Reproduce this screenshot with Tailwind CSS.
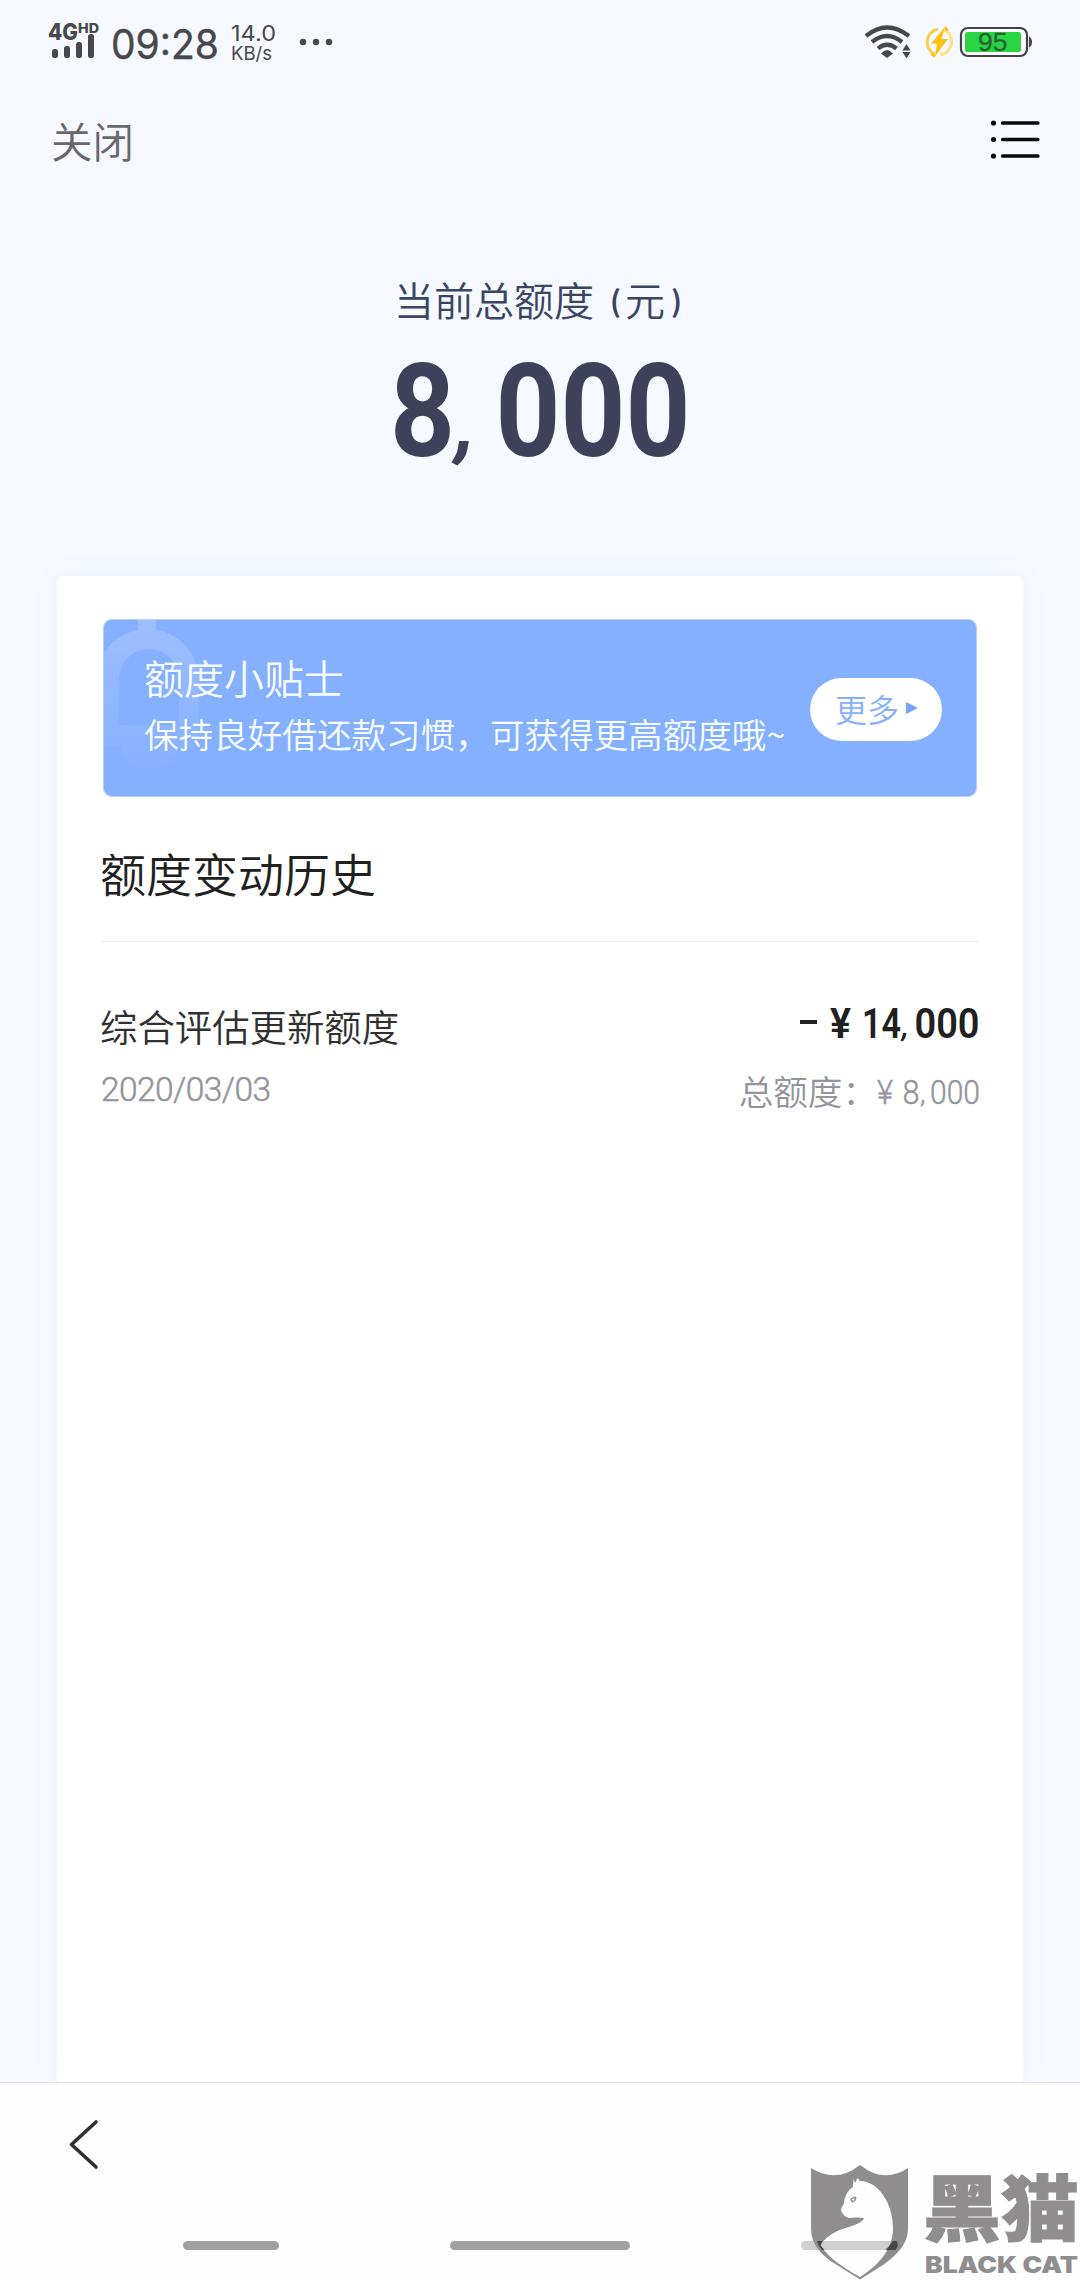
<!DOCTYPE html>
<html lang="zh-CN">
<head>
<meta charset="utf-8">
<title>额度</title>
<script src="https://cdn.jsdelivr.net/npm/@tailwindcss/browser@4"></script>
</head>
<body class="bg-[#f6f9ff]">
<div class="relative flex h-[2280px] w-[1080px] flex-col overflow-hidden bg-[#f6f9ff] font-['Noto_Sans_CJK_SC',sans-serif] font-[350]">

  <!-- status bar -->
  <div class="flex h-[84px] shrink-0 justify-between">
    <svg class="h-[84px] w-[360px] font-[Inter,sans-serif] font-normal" viewBox="0 0 360 84" fill="#47484b">
      <text x="48" y="40" font-size="23" font-weight="800" textLength="30" lengthAdjust="spacingAndGlyphs">4G</text>
      <text x="78" y="33" font-size="13" font-weight="800" textLength="21" lengthAdjust="spacingAndGlyphs">HD</text>
      <rect x="52" y="49" width="6" height="9" rx="2.5"/><rect x="64" y="46" width="6" height="12" rx="2.5"/><rect x="76" y="42" width="6" height="16" rx="2.5"/><rect x="88" y="34" width="6" height="24" rx="2.5"/>
      <text x="111" y="59" font-size="40.500" textLength="108" lengthAdjust="spacingAndGlyphs" stroke="#47484b" stroke-width=".4">09:28</text>
      <text x="231" y="41" font-size="21" textLength="45" lengthAdjust="spacingAndGlyphs">14.0</text>
      <text x="231" y="60" font-size="18.500" textLength="41" lengthAdjust="spacingAndGlyphs">KB/s</text>
      <circle cx="303" cy="42" r="3.200"/><circle cx="316" cy="42" r="3.200"/><circle cx="329" cy="42" r="3.200"/>
    </svg>
    <svg class="h-[84px] w-[240px] font-['Liberation_Sans',sans-serif] font-normal" viewBox="840 0 240 84" fill="none">
      <g stroke="#47484b" stroke-width="4.200">
        <path d="M866 36Q887 19 909 36"/><path d="M872 42Q887 30 902 42"/><path d="M878 48.500Q887 41 896.500 48.500"/>
      </g>
      <path d="M881 53.500Q887 46.500 893 53.500L887 58z" fill="#47484b"/>
      <path d="M902.500 50.500L906.500 44l4 6.500zM902.500 52l4 6.500 4-6.500z" fill="#47484b"/>
      <path d="M935 54.500A13.500 13.500 0 0 1 938 29" stroke="#fad04b" stroke-width="3"/>
      <path d="M943 29A13.500 13.500 0 0 1 940 55" stroke="#fbe08a" stroke-width="3"/>
      <path d="M945 27L931 43.500h6L935 56.500 948 39h-6.500z" fill="#fdc20f"/>
      <path d="M945 27l2.500 3.500M935 56.500l-4-3" stroke="#fdc20f" stroke-width="2.500"/>
      <rect x="961" y="28" width="66" height="28" rx="7" fill="#fff" stroke="#424347" stroke-width="2.200"/>
      <rect x="965" y="32" width="56" height="20" rx="2.500" fill="#29d543"/>
      <path d="M1029 36.500q3 1.500 3 5.500t-3 5.500z" fill="#424347"/>
      <text x="978" y="51" font-size="25" fill="#2c6135" textLength="29.500" lengthAdjust="spacingAndGlyphs" stroke="#2c6135" stroke-width=".3">95</text>
    </svg>
  </div>

  <!-- title bar -->
  <div class="flex h-[112px] shrink-0 items-center justify-between pr-10 pl-[51px]">
    <div class="text-[41.500px] leading-[60px] text-[#66686b]">关闭</div>
    <svg class="mb-0.5 h-[40px] w-[50px]" viewBox="990 119 50 40" fill="#060708">
      <circle cx="993.500" cy="123" r="2.600"/><circle cx="993.500" cy="139.500" r="2.600"/><circle cx="993.500" cy="156" r="2.600"/>
      <rect x="1001" y="121.200" width="38.500" height="3.600" rx="1.500"/><rect x="1001" y="137.700" width="38.500" height="3.600" rx="1.500"/><rect x="1001" y="154.200" width="38.500" height="3.600" rx="1.500"/>
    </svg>
  </div>

  <!-- total quota -->
  <div class="flex h-[380px] shrink-0 flex-col items-center pt-[73px]">
    <div class="flex h-[60px] w-[292px] items-center text-[40px] leading-[60px] whitespace-nowrap text-[#3a4563]">
      <span>当前总额度</span>
      <span class="ml-[12px] w-[20px] text-center text-[29px] leading-[60px] font-bold">(</span><span>元</span><span class="ml-0.5 w-[20px] text-center text-[29px] leading-[60px] font-bold">)</span>
    </div>
    <svg class="mt-[21px] h-[120px] w-[300px] overflow-visible font-[Roboto,sans-serif]" viewBox="390 350 300 120" fill="#3b4259" font-size="130" font-weight="700">
      <text x="390" y="456" textLength="65" lengthAdjust="spacingAndGlyphs">8</text>
      <text x="456" y="451" font-size="84" font-style="italic">,</text>
      <text x="495.500" y="456" textLength="195" lengthAdjust="spacingAndGlyphs">000</text>
    </svg>
  </div>

  <!-- card -->
  <div class="mx-[57px] flex grow flex-col rounded-t-lg bg-white px-[44px] pt-[43px] shadow-[0_0_24px_#e9f0ff]">
    <div class="relative mx-0.5 flex h-[178px] shrink-0 items-center justify-between overflow-hidden rounded-[9px] border border-[#b2d0ff] bg-[#85afff] pr-[34px] pl-[40px] text-[#f8fdff]">
      <svg class="absolute top-0 left-0 h-[176px] w-[110px]" viewBox="104 620 110 176">
        <defs><linearGradient id="bell" x1="0" y1="0" x2="0" y2="1"><stop offset="0" stop-color="#fff" stop-opacity=".2"/><stop offset="1" stop-color="#fff" stop-opacity=".01"/></linearGradient></defs>
        <path fill="url(#bell)" fill-rule="evenodd" d="M138 618h18v12c25 4 43 25 43 51v66h-21c-2 16-13 25-30 25s-25-10-27-25H96v-66c0-26 18-47 42-51zM119 725h60v-45c0-17-13-31-30-31s-30 14-30 31z"/>
      </svg>
      <div class="relative flex flex-col pb-[7px]">
        <div class="h-[57px] text-[40px] leading-[57px]">额度小贴士</div>
        <div class="h-[54px] text-[34.600px] leading-[54px] whitespace-nowrap">保持良好借还款习惯，可获得更高额度哦~</div>
      </div>
      <div class="relative mt-0.5 flex h-[63px] w-[132px] items-center rounded-full bg-white pl-[25px] text-[32px] leading-[60px] text-[#85afff]">
        <span class="pb-[3px]">更多</span>
        <svg class="mb-0.5 ml-[7px] h-[12px] w-[12px]" viewBox="0 0 12 12"><path d="M0 0l12 6-12 6z" fill="#76a5f8"/></svg>
      </div>
    </div>

    <div class="mt-[40px] h-[70px] text-[46px] leading-[70px] text-[#202020]"><span class="-ml-px">额度变动历史</span></div>
    <div class="mt-[34px] h-px bg-[#ececee]"></div>

    <div class="mt-[57px] flex justify-between">
      <div class="flex flex-col">
        <div class="-ml-px h-[54px] text-[37.400px] leading-[54px] text-[#303030]">综合评估更新额度</div>
        <svg class="mt-[10px] h-[50px] w-[180px] overflow-visible font-[Roboto,sans-serif]" viewBox="102 1063 180 50" fill="#92959d" font-size="33.500" font-weight="300">
          <text x="102" y="1101" textLength="170" stroke="#92959d" stroke-width=".5"><tspan>2020/03/03</tspan></text>
        </svg>
      </div>
      <div class="flex flex-col items-end">
        <svg class="h-[60px] w-[190px] overflow-visible font-[Roboto,sans-serif]" viewBox="789 999 190 60" fill="#202020" font-size="42" font-weight="600">
          <rect x="800" y="1020" width="17" height="4"/>
          <text x="830" y="1038" textLength="21" lengthAdjust="spacingAndGlyphs">¥</text>
          <text x="862" y="1038" textLength="39" lengthAdjust="spacingAndGlyphs">14</text>
          <text x="902" y="1036" font-size="29" font-style="italic">,</text>
          <text x="914.500" y="1038" textLength="65" lengthAdjust="spacingAndGlyphs">000</text>
        </svg>
        <div class="mt-[4px] flex h-[54px] items-start text-[34.600px] leading-[54px] text-[#92959d]">
          <span class="-mr-[3px]">总额度：</span>
          <svg class="h-[50px] w-[105px] overflow-visible font-[Roboto,sans-serif]" viewBox="874 1063 105 50" fill="#92959d" font-size="33" font-weight="300" stroke="#92959d" stroke-width=".5">
            <text x="877" y="1104" textLength="16" lengthAdjust="spacingAndGlyphs">¥</text>
            <text x="902.500" y="1104" textLength="17" lengthAdjust="spacingAndGlyphs">8</text>
            <text x="920" y="1103" font-size="28">,</text>
            <text x="930" y="1104" textLength="50" lengthAdjust="spacingAndGlyphs">000</text>
          </svg>
        </div>
      </div>
    </div>
  </div>

  <!-- bottom navigation -->
  <div class="relative flex h-[198px] shrink-0 flex-col border-t border-[#e2e3e5] bg-[#fefefe]">
    <svg class="mt-[35px] ml-[66px] h-[54px] w-[36px] shrink-0" viewBox="66 2118 36 54" fill="none" stroke="#303030" stroke-width="3.600" stroke-linecap="round" stroke-linejoin="round"><path d="M96 2122L71.500 2144.500 96 2167"/></svg>
    <div class="mt-[69px] flex h-[9px] justify-between pr-[183px] pl-[183px]">
      <div class="w-[96px] rounded-full bg-[#a0a0a0]"></div>
      <div class="w-[180px] rounded-full bg-[#a0a0a0]"></div>
      <div class="w-[96px] rounded-full bg-[#cfcfcf]"></div>
    </div>
  </div>

  <!-- brand watermark -->
  <svg class="absolute top-[2150px] left-[790px] h-[130px] w-[290px]" viewBox="790 2150 290 130" fill="#8f8d8e">
    <path fill-rule="evenodd" d="M811 2168Q836 2184 860 2165Q884 2184 908 2168V2228C908 2244 897 2255 883 2265L860 2279.500 837 2265C820 2255 811 2244 811 2228zM855 2183l-1.500-4.500L853 2187C847 2191 845 2196 844 2203L841 2209C841 2213 845 2217 849 2218Q856 2217 864 2218C861 2226 842 2227 832 2234Q824 2239 820.500 2245C827 2256 839 2265 860 2277C879 2265 893 2249 893 2228C893 2203 878 2181 860 2181L857.500 2178z"/>
    <path d="M850 2200q1-3 5-3.500l1.500 1q-1 4.500-4 5z"/><path d="M851.500 2199.500l3-1.500-.5 3z" fill="#fff"/>
    <path d="M817 2241h5.500l-2 4.500 4 4.500h-2.500q-4-4-5-9zM893 2241h3.500q3 4.500-1 9h-10q4-4 7.500-9z" fill="#474647"/>
    <g class="font-['Noto_Sans_CJK_SC',sans-serif]" font-weight="900">
      <text x="923" y="2235" font-size="72" textLength="156" lengthAdjust="spacingAndGlyphs" stroke="#8f8d8e" stroke-width="1">黑猫</text>
    </g>
    <text class="font-[Inter,sans-serif]" x="925" y="2273" font-size="22.500" font-weight="900" textLength="153" lengthAdjust="spacingAndGlyphs">BLACK CAT</text>
  </svg>
</div>
</body>
</html>
